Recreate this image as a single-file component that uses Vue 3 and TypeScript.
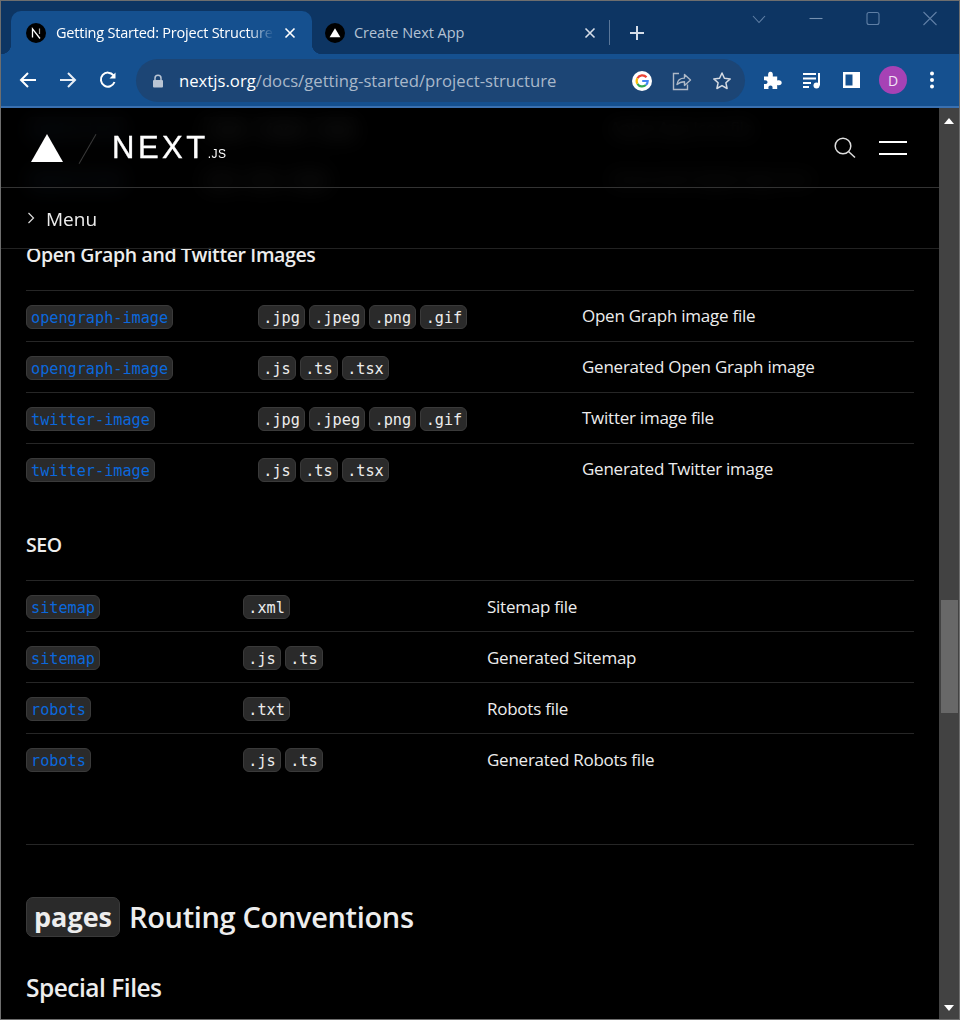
<script setup lang="ts">
interface Row { name: string; exts: string[]; desc: string }
interface Section { title: string | null; cols: string; rows: Row[] }

const sections: Section[] = [
  {
    title: null,
    cols: 'ghost',
    rows: [
      { name: 'apple-icon', exts: ['.jpg', '.jpeg', '.png'], desc: 'Apple App Icon file' },
      { name: 'apple-icon', exts: ['.js', '.ts', '.tsx'], desc: 'Generated Apple App Icon' },
    ],
  },
  {
    title: 'Open Graph and Twitter Images',
    cols: 'wide',
    rows: [
      { name: 'opengraph-image', exts: ['.jpg', '.jpeg', '.png', '.gif'], desc: 'Open Graph image file' },
      { name: 'opengraph-image', exts: ['.js', '.ts', '.tsx'], desc: 'Generated Open Graph image' },
      { name: 'twitter-image', exts: ['.jpg', '.jpeg', '.png', '.gif'], desc: 'Twitter image file' },
      { name: 'twitter-image', exts: ['.js', '.ts', '.tsx'], desc: 'Generated Twitter image' },
    ],
  },
  {
    title: 'SEO',
    cols: 'narrow',
    rows: [
      { name: 'sitemap', exts: ['.xml'], desc: 'Sitemap file' },
      { name: 'sitemap', exts: ['.js', '.ts'], desc: 'Generated Sitemap' },
      { name: 'robots', exts: ['.txt'], desc: 'Robots file' },
      { name: 'robots', exts: ['.js', '.ts'], desc: 'Generated Robots file' },
    ],
  },
]
</script>

<template>
  <div class="window">
    <div class="tabstrip">
      <div class="tab active">
        <svg class="fav" viewBox="0 0 20 20" width="20" height="20">
          <circle cx="10" cy="10" r="10" fill="#000" />
          <path d="M6.5 14.5V5.8L14 15.5" fill="none" stroke="#fff" stroke-width="1.3" />
          <path d="M13.5 5.5V11" fill="none" stroke="#aaa" stroke-width="1.2" />
        </svg>
        <span class="tab-title fade">Getting Started: Project Structure</span>
        <svg class="tab-x" viewBox="0 0 12 12" width="12" height="12">
          <path d="M1.5 1.5l9 9M10.5 1.5l-9 9" stroke="#fff" stroke-width="1.6" />
        </svg>
      </div>
      <div class="tab idle">
        <svg class="fav" viewBox="0 0 20 20" width="20" height="20">
          <circle cx="10" cy="10" r="10" fill="#000" />
          <path d="M10 5.2l5.4 9H4.6z" fill="#fff" />
        </svg>
        <span class="tab-title dim">Create Next App</span>
        <svg class="tab-x" viewBox="0 0 12 12" width="12" height="12">
          <path d="M1.5 1.5l9 9M10.5 1.5l-9 9" stroke="#d5dde8" stroke-width="1.6" />
        </svg>
      </div>
      <span class="tab-sep"></span>
      <svg class="plus" viewBox="0 0 16 16" width="16" height="16">
        <path d="M8 1v14M1 8h14" stroke="#d5dde8" stroke-width="2" />
      </svg>
      <div class="winctl">
        <svg viewBox="0 0 16 16" width="16" height="16"><path d="M2 5l6 6.5L14 5" fill="none" stroke="#5f7fa5" stroke-width="1.1" /></svg>
        <svg viewBox="0 0 16 16" width="16" height="16"><path d="M1.5 7.5h13" stroke="#7590b0" stroke-width="1.1" /></svg>
        <svg viewBox="0 0 16 16" width="16" height="16"><rect x="2" y="1.5" width="12" height="12" rx="2" fill="none" stroke="#5f7fa5" stroke-width="1.1" /></svg>
        <svg viewBox="0 0 16 16" width="16" height="16"><path d="M1.5 1l13 13M14.5 1l-13 13" stroke="#5f7fa5" stroke-width="1.1" /></svg>
      </div>
    </div>

    <div class="toolbar">
      <svg class="tool" viewBox="0 0 20 20" width="20" height="20"><path d="M18 10H3M10 3l-7 7 7 7" fill="none" stroke="#fff" stroke-width="2" /></svg>
      <svg class="tool" viewBox="0 0 20 20" width="20" height="20"><path d="M2 10h15M10 3l7 7-7 7" fill="none" stroke="#e8eef5" stroke-width="2" /></svg>
      <svg class="tool" viewBox="0 0 20 20" width="20" height="20"><path d="M16.5 12a7 7 0 1 1-1-6.6" fill="none" stroke="#fff" stroke-width="2" /><path d="M17.5 2.5v6h-6z" fill="#fff" /></svg>
      <div class="omni">
        <svg class="lock" viewBox="0 0 12 14" width="12" height="14"><path d="M3 6V4.2a3 3 0 0 1 6 0V6" fill="none" stroke="#b9c5d4" stroke-width="1.5" /><rect x="1" y="6" width="10" height="7.5" rx="1" fill="#b9c5d4" /></svg>
        <span class="url"><b>nextjs.org</b>/docs/getting-started/project-structure</span>
        <svg class="omni-g" viewBox="0 0 20 20" width="20" height="20">
          <circle cx="10" cy="10" r="10" fill="#fff" />
          <path d="M14.5 6.3A5.7 5.7 0 0 0 5.4 7.2" fill="none" stroke="#ea4335" stroke-width="2.2" />
          <path d="M5.4 7.2a5.7 5.7 0 0 0 0 5.6" fill="none" stroke="#fbbc05" stroke-width="2.2" />
          <path d="M5.4 12.8a5.7 5.7 0 0 0 8.5 1.2" fill="none" stroke="#34a853" stroke-width="2.2" />
          <path d="M13.9 14c1.2-1 1.8-2.4 1.8-4H10.2" fill="none" stroke="#4285f4" stroke-width="2.2" />
        </svg>
        <svg class="omni-i" viewBox="0 0 20 20" width="20" height="20">
          <path d="M7 2.5H1.5v16h14v-5" fill="none" stroke="#aeb9c7" stroke-width="1.4" />
          <path d="M5 13.5c.4-4 3.4-6.4 7.5-6.4V3.5l6 5.6-6 5.3v-3.6c-3.200 0-5.700 1-7.500 2.700z" fill="none" stroke="#aeb9c7" stroke-width="1.400" stroke-linejoin="round" />
        </svg>
        <svg class="omni-i star" viewBox="0 0 20 20" width="20" height="20">
          <path d="M10 2l2.400 5.300 5.800.6-4.300 3.900 1.200 5.700L10 14.600l-5.100 2.900 1.200-5.700L1.800 7.900l5.800-.6z" fill="none" stroke="#d5dbe3" stroke-width="1.500" stroke-linejoin="round" />
        </svg>
      </div>
      <svg class="tb-ext" viewBox="0 0 20 20" width="20" height="20"><path d="M2 6.500h4.200c-.4-3.500 .6-4.700 2.300-4.700s2.700 1.300 2.300 4.700h4.400v4c3-.6 4.500.3 4.500 2.300s-1.500 2.900-4.500 2.300v3.900h-4.700c.4-2.400-.5-3.400-2-3.400s-2.500 1-2 3.400H2v-5c2.400.4 3.500-.5 3.500-1.800S4.400 9.800 2 10.300z" fill="#fff" /></svg>
      <svg class="tb-ic" viewBox="0 0 20 20" width="20" height="20"><path d="M1 4h13M1 8.500h13M1 13h8M1 17h6" stroke="#fff" stroke-width="1.800" /><path d="M17 3v12.500" stroke="#fff" stroke-width="2" /><circle cx="14.500" cy="15.500" r="3" fill="#fff" /></svg>
      <svg class="tb-ic" viewBox="0 0 20 20" width="20" height="20"><path fill-rule="evenodd" d="M1 2h17v16H1zM3.500 4.500v11h7v-11z" fill="#fff" /></svg>
      <span class="avatar">D</span>
      <svg class="tb-dots" viewBox="0 0 6 20" width="6" height="20"><circle cx="3" cy="3.500" r="2" fill="#fff" /><circle cx="3" cy="10" r="2" fill="#fff" /><circle cx="3" cy="16.500" r="2" fill="#fff" /></svg>
    </div>
    <div class="toolbar-line"></div>

    <div class="viewport">
      <div class="pane">
        <main class="doc">
          <section v-for="(s, i) in sections" :key="i">
            <h3 v-if="s.title" class="sub">{{ s.title }}</h3>
            <div class="table" :class="s.cols">
              <div v-for="(r, j) in s.rows" :key="j" class="row">
                <div class="codes"><code class="code link">{{ r.name }}</code></div>
                <div class="codes exts"><code v-for="e in r.exts" :key="e" class="code">{{ e }}</code></div>
                <div class="desc">{{ r.desc }}</div>
              </div>
            </div>
          </section>
          <hr class="rule" />
          <h2 class="title"><code class="big">pages</code> Routing Conventions</h2>
          <h3 class="sub2">Special Files</h3>
        </main>

        <header class="sitebar">
          <div class="brand-row">
            <div class="brand">
              <svg viewBox="0 0 32 28" width="32" height="28"><path d="M16 0l16 28H0z" fill="#fff" /></svg>
              <span class="slash"></span>
              <span class="wordmark">NEXT<small>.JS</small></span>
            </div>
            <div class="bar-actions">
              <svg viewBox="0 0 24 24" width="24" height="24"><circle cx="10" cy="10" r="7.800" fill="none" stroke="#ddd" stroke-width="1.500" /><path d="M15.500 15.500l6.500 6" stroke="#ddd" stroke-width="1.500" /></svg>
              <svg class="burger" viewBox="0 0 28 14" width="28" height="14"><path d="M0 1h28M0 13h28" stroke="#fff" stroke-width="2" /></svg>
            </div>
          </div>
          <div class="menu-row">
            <svg viewBox="0 0 8 12" width="8" height="12"><path d="M1.500 1l5 5-5 5" fill="none" stroke="#ddd" stroke-width="1.200" /></svg>
            <span class="menu-label">Menu</span>
          </div>
        </header>
      </div>

      <aside class="scrollbar">
        <svg viewBox="0 0 10 6" width="10" height="6"><path d="M5 0l5 6H0z" fill="#fff" /></svg>
        <div class="track"><div class="thumb"></div></div>
        <svg viewBox="0 0 10 6" width="10" height="6"><path d="M5 6l5-6H0z" fill="#fff" /></svg>
      </aside>
    </div>
  </div>
</template>

<style>
html, body { margin: 0; background: #000; }
</style>

<style scoped>
.window {
  width: 960px; height: 1020px; box-sizing: border-box; overflow: hidden;
  border: 1px solid #6e6e6e;
  display: flex; flex-direction: column;
  font-family: "Open Sans", "Noto Sans", sans-serif; background: #000;
}
.tabstrip {
  height: 53px; flex: none; background: #0d3563; display: flex; align-items: flex-end;
  padding-left: 10px; position: relative;
}
.tab {
  height: 43px; display: flex; align-items: center; box-sizing: border-box; position: relative;
}
.active {
  width: 301px; padding: 0 16px 0 15px; background: #15508f; border-radius: 10px 10px 0 0; gap: 10px;
}
.active::before, .active::after {
  content: ""; position: absolute; bottom: 0; width: 10px; height: 10px;
}
.active::before { left: -10px; background: radial-gradient(circle at 0 0, transparent 10px, #15508f 10.500px); }
.active::after { right: -10px; background: radial-gradient(circle at 100% 0, transparent 10px, #15508f 10.500px); }
.idle { width: 297px; padding: 0 13px; gap: 9px; }
.fav { flex: none; }
.tab-title { font-size: 14.500px; white-space: nowrap; overflow: hidden; flex: 1; }
.fade {
  color: #fff; letter-spacing: -0.220px;
  -webkit-mask-image: linear-gradient(90deg, #000 88%, transparent); mask-image: linear-gradient(90deg, #000 88%, transparent);
}
.dim { color: #b4c2d3; letter-spacing: -0.030px; }
.tab-x { flex: none; }
.tab-sep { width: 1px; height: 25px; background: #5a7799; margin: 0 0 9px 0; }
.plus { margin: 0 0 13px 19px; }
.winctl {
  position: absolute; top: 10px; left: 750px; display: flex; gap: 41px;
}
.toolbar {
  height: 52px; flex: none; background: #15508f; display: flex; align-items: center; padding: 0 0 0 17px;
}
.tool { flex: none; margin-right: 20px; }
.omni {
  width: 609px; height: 43px; margin: 0 0 0 -2px; border-radius: 22px; background: #1c4575;
  display: flex; align-items: center; flex: none; box-sizing: border-box; padding: 1px 13px 0 16px;
}
.lock { flex: none; margin-right: 15px; }
.url { font-size: 16.700px; color: #a9b8ca; flex: 1; white-space: nowrap; }
.url b { color: #fff; font-weight: 400; }
.omni-g { margin-right: 20px; }
.omni-i { margin-right: 20px; }
.star { margin-right: 0; }
.tb-ext { margin-left: 17px; }
.tb-ic { margin-left: 20px; }
.avatar {
  width: 28px; height: 28px; border-radius: 50%; background: #a642b5; color: #f3e3f5; font-size: 14px;
  display: flex; align-items: center; justify-content: center; margin-left: 17px; flex: none;
}
.tb-dots { margin-left: 22px; }
.toolbar-line { height: 2px; flex: none; background: #3a70b0; }

.viewport { flex: 1; min-height: 0; display: flex; }
.pane { flex: 1; min-width: 0; position: relative; overflow: hidden; background: #000; }
.doc { padding: 0 25px; margin-top: -6px; color: #ededed; }
.sub {
  margin: 0; padding: 36px 0 20px; font-size: 19.500px; line-height: 30px; font-weight: 600; color: #ededed;
  letter-spacing: -0.380px;
}
.row {
  display: grid; height: 51px; box-sizing: border-box; border-top: 1px solid #262626; align-items: center;
}
.ghost .row { grid-template-columns: 174px 410px 1fr; }
.wide .row { grid-template-columns: 232px 324px 1fr; }
.narrow .row { grid-template-columns: 217px 244px 1fr; }
.codes { margin-top: 2px; }
.exts { display: flex; gap: 4px; }
.desc { font-size: 17px; color: #ededed; letter-spacing: -0.250px; margin-bottom: 1px; }
.narrow .desc { margin-bottom: 0; }
.code {
  display: inline-block; box-sizing: border-box; height: 24px; line-height: 24px; padding: 0 4px;
  font-family: "DejaVu Sans Mono", monospace; font-size: 15.200px; color: #ededed;
  background: #2a2a2a; border: 1px solid #3a3a3a; border-radius: 6px; white-space: nowrap;
}
.exts .code { padding: 0 4.250px; }
.link { color: #0b68dc; }
.rule { border: 0; border-top: 1px solid #262626; margin: 60px 0 0; }
.title {
  margin: 52px 0 0; font-size: 29px; line-height: 40px; font-weight: 600; color: #ededed;
  display: flex; align-items: center; gap: 9px; letter-spacing: -0.340px;
}
.big {
  font-family: "Open Sans", sans-serif; font-weight: 700; background: #2a2a2a; border: 1px solid #3a3a3a;
  border-radius: 7px; height: 40px; line-height: 38px; padding: 0 7px; box-sizing: border-box; font-size: 27px;
  letter-spacing: 0;
}
.sub2 { margin: 35px 0 0; font-size: 24.500px; line-height: 32px; font-weight: 600; color: #ededed; letter-spacing: -0.500px; }

.sitebar {
  position: absolute; top: 0; left: 0; right: 0; color: #ededed;
  background: rgba(0, 0, 0, 0.88); -webkit-backdrop-filter: blur(10px); backdrop-filter: blur(10px);
  border-bottom: 1px solid #222;
}
.brand-row {
  height: 80px; box-sizing: border-box; border-bottom: 1px solid #333;
  display: flex; align-items: center; justify-content: space-between; padding: 0 32px 0 30px;
}
.brand { display: flex; align-items: center; }
.slash {
  width: 1px; height: 34px; background: #3a3a3a; transform: rotate(30deg); margin: 2px 0 0 24px;
}
.wordmark {
  margin-left: 24px; font-family: "Liberation Sans", sans-serif; font-size: 31px; line-height: 30px; color: #fff;
  letter-spacing: 3.500px; position: relative; top: 3px; -webkit-text-stroke: 0.4px #fff;
}
.wordmark small { font-size: 12px; letter-spacing: 0.500px; margin-left: -1px; -webkit-text-stroke: 0; }
.bar-actions { display: flex; align-items: center; gap: 22px; }
.burger { margin-top: 1px; }
.menu-row {
  height: 60px; display: flex; align-items: center; gap: 11px; padding-left: 26px; font-size: 19px; font-weight: 500;
}
.menu-label { margin-top: 2px; }
.scrollbar {
  width: 20px; flex: none; background: #424242; display: flex; flex-direction: column; align-items: center;
  padding: 10px 0 8px; box-sizing: border-box;
}
.track { flex: 1; width: 100%; padding: 476px 1px 0 2px; box-sizing: border-box; }
.thumb { height: 113px; background: #686868; }
</style>
